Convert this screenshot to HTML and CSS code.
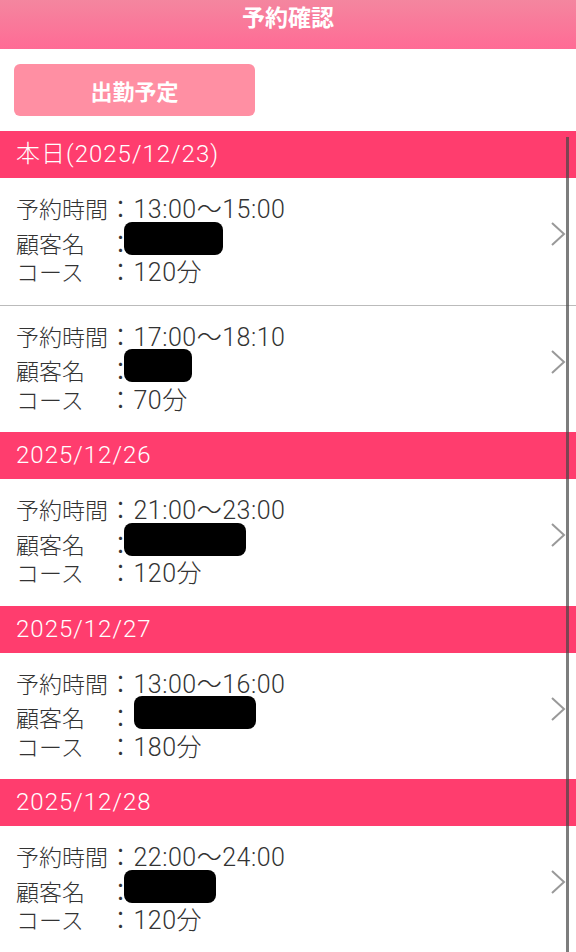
FILE: index.html
```html
<!DOCTYPE html>
<html lang="ja">
<head>
    <meta charset="UTF-8">
    <meta name="viewport" content="width=device-width, initial-scale=1.0">
    <title>予約確認</title>
    <link rel="stylesheet" href="styles.css">
</head>
<body>

    <header class="topbar">
        <h1>予約確認</h1>
    </header>

    <div class="actions">
        <button class="btn-shift">出勤予定</button>
    </div>

    <div class="schedule">

        <div class="day-title">本日(2025/12/23)</div>
        <a class="booking" href="#">
            <div class="rows">
                <div class="row"><span class="label">予約時間</span>：13:00〜15:00</div>
                <div class="row"><span class="label">顧客名</span>：<span class="mask mask-a"></span></div>
                <div class="row"><span class="label">コース</span>：120分</div>
            </div>
            <svg class="chev" width="16" height="26" viewBox="0 0 16 26"><polyline points="2,2 14,13 2,24" /></svg>
        </a>
        <a class="booking last" href="#">
            <div class="rows">
                <div class="row"><span class="label">予約時間</span>：17:00〜18:10</div>
                <div class="row"><span class="label">顧客名</span>：<span class="mask mask-b"></span></div>
                <div class="row"><span class="label">コース</span>：70分</div>
            </div>
            <svg class="chev" width="16" height="26" viewBox="0 0 16 26"><polyline points="2,2 14,13 2,24" /></svg>
        </a>

        <div class="day-title">2025/12/26</div>
        <a class="booking last" href="#">
            <div class="rows">
                <div class="row"><span class="label">予約時間</span>：21:00〜23:00</div>
                <div class="row"><span class="label">顧客名</span>：<span class="mask mask-c"></span></div>
                <div class="row"><span class="label">コース</span>：120分</div>
            </div>
            <svg class="chev" width="16" height="26" viewBox="0 0 16 26"><polyline points="2,2 14,13 2,24" /></svg>
        </a>

        <div class="day-title">2025/12/27</div>
        <a class="booking last" href="#">
            <div class="rows">
                <div class="row"><span class="label">予約時間</span>：13:00〜16:00</div>
                <div class="row"><span class="label">顧客名</span>：<span class="mask mask-d"></span></div>
                <div class="row"><span class="label">コース</span>：180分</div>
            </div>
            <svg class="chev" width="16" height="26" viewBox="0 0 16 26"><polyline points="2,2 14,13 2,24" /></svg>
        </a>

        <div class="day-title">2025/12/28</div>
        <a class="booking last" href="#">
            <div class="rows">
                <div class="row"><span class="label">予約時間</span>：22:00〜24:00</div>
                <div class="row"><span class="label">顧客名</span>：<span class="mask mask-e"></span></div>
                <div class="row"><span class="label">コース</span>：120分</div>
            </div>
            <svg class="chev" width="16" height="26" viewBox="0 0 16 26"><polyline points="2,2 14,13 2,24" /></svg>
        </a>

    </div>

    <div class="scroll-thumb"></div>

</body>
</html>
```

FILE: styles.css
```css
body {
    margin: 0;
    font-family: Roboto, "Noto Sans CJK JP", sans-serif;
    background-color: #fff;
    color: #333;
}

.topbar {
    height: 49px;
    background: linear-gradient(#f4869f, #ff6b95);
    text-align: center;
}

.topbar h1 {
    margin: 0;
    font-size: 23px;
    line-height: 38px;
    font-weight: bold;
    color: #fff;
}

.actions {
    padding: 15px 14px;
}

.btn-shift {
    display: block;
    width: 241px;
    height: 52px;
    border: none;
    border-radius: 6px;
    background-color: #ff8fa3;
    color: #fff;
    font-family: inherit;
    font-size: 22px;
    font-weight: bold;
}

.day-title {
    height: 47px;
    line-height: 47px;
    padding-left: 16px;
    background-color: #ff3d6e;
    color: #fff;
    font-size: 24px;
    font-weight: 300;
    letter-spacing: 1px;
}

.booking {
    display: flex;
    align-items: center;
    justify-content: space-between;
    padding: 16px 10px 16px 16px;
    border-bottom: 1px solid #bbb;
    color: #333;
    text-decoration: none;
}

.booking.last {
    border-bottom: none;
}

.rows {
    display: grid;
    grid-auto-rows: 31.5px;
}

.row {
    font-size: 25px;
    font-weight: 300;
    line-height: 31.5px;
    letter-spacing: 0.5px;
    white-space: nowrap;
}

.label {
    display: inline-block;
    width: 92px;
    font-size: 23px;
    letter-spacing: 0;
}

/* blacked-out customer name */
.mask {
    display: inline-block;
    height: 33px;
    margin-left: -10px;
    vertical-align: -6px;
    transform: translateY(-4px);
    background-color: #000;
    border-radius: 8px;
}

.mask-a { width: 99px; }
.mask-b { width: 68px; }
.mask-c { width: 122px; }
.mask-d { width: 122px; margin-left: 0; }
.mask-e { width: 92px; }

.chev {
    margin-top: -14px;
}

.chev polyline {
    fill: none;
    stroke: #999;
    stroke-width: 2;
}

.scroll-thumb {
    position: fixed;
    top: 137px;
    bottom: 0;
    right: 7px;
    width: 3px;
    background-color: rgba(70, 70, 70, 0.7);
}
```
